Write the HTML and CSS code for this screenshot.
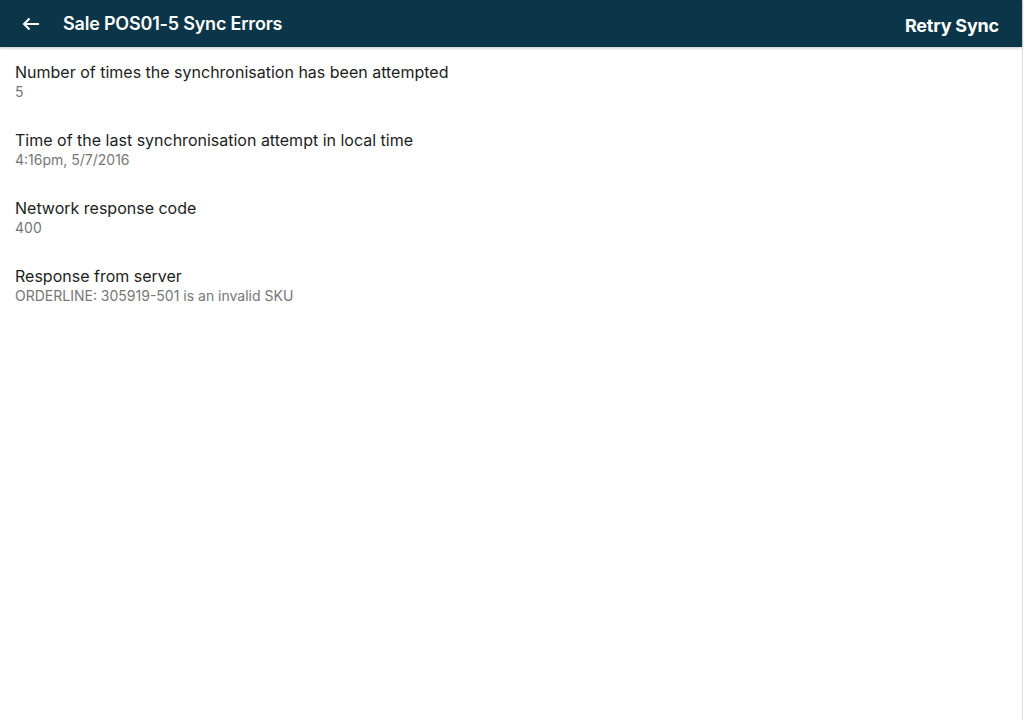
FILE: index.html
```html
<!DOCTYPE html>
<html>
  <head>
    <title>Sale POS01-5 Sync Errors</title>
    <meta name="viewport" content="width=device-width, initial-scale=1.0"/>
    <link rel="stylesheet" href="styles.css">
  </head>
  <body>
    <div id="screen">
      <header class="toolbar">
        <button class="back" aria-label="Back">
          <svg width="18" height="14" viewBox="0 0 18 14">
            <path d="M17 7H2M7.5 1.5L2 7l5.5 5.5" fill="none" stroke="#fff" stroke-width="2"/>
          </svg>
        </button>
        <h1>Sale POS01-5 Sync Errors</h1>
        <button class="retry">Retry Sync</button>
      </header>

      <main class="details">
        <div class="field">
          <div class="field-label">Number of times the synchronisation has been attempted</div>
          <div class="field-value">5</div>
        </div>
        <div class="field">
          <div class="field-label">Time of the last synchronisation attempt in local time</div>
          <div class="field-value">4:16pm, 5/7/2016</div>
        </div>
        <div class="field">
          <div class="field-label">Network response code</div>
          <div class="field-value">400</div>
        </div>
        <div class="field">
          <div class="field-label">Response from server</div>
          <div class="field-value">ORDERLINE: 305919-501 is an invalid SKU</div>
        </div>
      </main>
    </div>
  </body>
</html>
```

FILE: styles.css
```css
html, body {
    height: 100%;
}

body {
    margin: 0;

    font-family: Inter, "Noto Sans", sans-serif;
    color: #1d1d1d;
    background: #fff;
}

#screen {
    height: 100%;
    width: 1023px;
    box-sizing: border-box;
    border-right: 1px solid #dcdcdc;
}

.toolbar {
    display: flex;
    align-items: center;
    height: 47px;
    padding: 0 23px 0 22px;

    color: #fff;
    background: #0b3548;
    box-shadow: 0 1px 3px rgba(0, 0, 0, 0.25);
}

.toolbar h1 {
    flex: 1;
    margin: 0 0 0 23px;

    font-size: 18px;
    font-weight: 600;
    letter-spacing: -0.2px;
}

button {
    padding: 0;
    border: none;
    background: none;
    color: #fff;
    font-family: inherit;
    cursor: pointer;
}

.back {
    display: flex;
    width: 18px;
    height: 14px;
}

.retry {
    margin-top: 4px;
    font-size: 18px;
    font-weight: 700;
    letter-spacing: -0.2px;
}

.details {
    padding: 15px 15px 0 15px;
}

.field {
    height: 68px;
}

.field-label {
    font-size: 16px;
    line-height: 20px;
}

.field-value {
    font-size: 14px;
    line-height: 19px;
    color: #777;
}
```
